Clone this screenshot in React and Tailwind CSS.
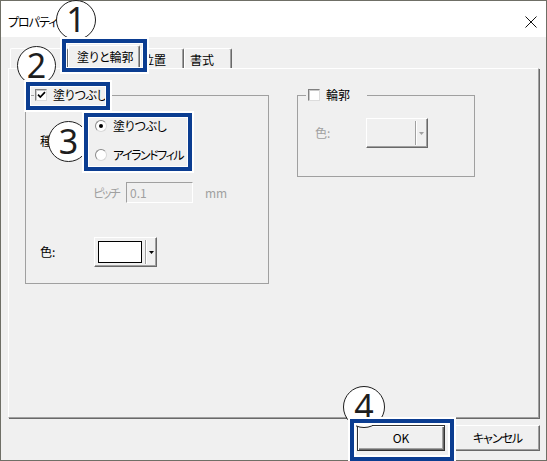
import React from "react";

function Checkbox({ checked }) {
  return (
    <span className="w-[12px] h-[12px] bg-white border border-t-[#808080] border-l-[#808080] border-r-[#dcdcdc] border-b-[#dcdcdc] shadow-[inset_1px_1px_0_#c8c8c8] flex items-center justify-center shrink-0">
      {checked && (
        <svg width="9" height="8" viewBox="0 0 9 8">
          <path d="M1 3.6 L3.3 6 L8 1.2" stroke="black" strokeWidth="1.7" fill="none" />
        </svg>
      )}
    </span>
  );
}

function Radio({ checked }) {
  return (
    <span className="w-[12px] h-[12px] rounded-full bg-white border border-t-[#8a8a8a] border-l-[#8a8a8a] border-r-[#d8d8d8] border-b-[#d8d8d8] flex items-center justify-center shrink-0">
      {checked && <span className="w-[4px] h-[4px] rounded-full bg-black" />}
    </span>
  );
}

function Arrow({ color }) {
  return (
    <svg width="5" height="3" viewBox="0 0 5 3">
      <path d="M0 0 H5 L2.5 3 Z" fill={color} />
    </svg>
  );
}

function Circle({ n, className }) {
  return (
    <div
      className={
        "absolute z-20 rounded-full bg-white border-[1.5px] border-[#1e1e1e] flex items-center justify-center text-[34px] leading-none text-[#1e1e1e] font-['Noto_Sans','Liberation_Sans',sans-serif] " +
        className
      }
    >
      <span className="-mt-[2px]">{n}</span>
    </div>
  );
}

export default function App() {
  return (
    <div className="relative w-[547px] h-[461px] font-['Noto_Sans_CJK_JP','Noto_Sans',sans-serif] [font-feature-settings:'palt'] text-[12px] text-black leading-[16px]">
      <div className="w-full h-full border border-[#6f6f66] bg-[#f0f0f0] flex flex-col overflow-hidden">
        {/* Title bar */}
        <div className="h-[36px] bg-white flex items-center justify-between pl-[7px] pr-[9px] pt-[6px] shrink-0">
          <span className="tracking-[-1px]">プロパティ</span>
          <svg width="12" height="12" viewBox="0 0 12 12">
            <path d="M0.5 0.5 L11.5 11.5 M11.5 0.5 L0.5 11.5" stroke="#111" strokeWidth="1" fill="none" />
          </svg>
        </div>

        {/* Body */}
        <div className="flex-1 flex flex-col px-[7px] pt-[8px]">
          {/* Tabs */}
          <div className="flex items-end h-[23px] pl-[2px] relative z-10">
            <div className="w-[58px] h-[20px] border-t border-l border-r border-t-white border-l-white border-r-[#696969] shadow-[inset_-1px_0_0_#a0a0a0] rounded-t-[2px] pt-[3px] text-center">
              図形
            </div>
            <div className="w-[72px] h-[24px] -mb-px bg-[#f0f0f0] border-t border-l border-r border-t-white border-l-white border-r-[#696969] shadow-[inset_-1px_0_0_#a0a0a0] rounded-t-[2px] pt-[3px] pl-[8px]">
              塗りと輪郭
            </div>
            <div className="w-[44px] h-[20px] border-t border-l border-r border-t-white border-l-white border-r-[#696969] shadow-[inset_-1px_0_0_#a0a0a0] rounded-t-[2px] pt-[3px] pl-[1px]">
              位置
            </div>
            <div className="w-[48px] h-[20px] border-t border-l border-r border-t-white border-l-white border-r-[#696969] shadow-[inset_-1px_0_0_#a0a0a0] rounded-t-[2px] pt-[3px] pl-[5px]">
              書式
            </div>
          </div>

          {/* Panel */}
          <div className="h-[350px] border border-t-white border-l-white border-r-[#a0a0a0] border-b-[#a0a0a0] shadow-[1px_1px_0_#696969] flex items-start gap-[28px] pl-[16px] pt-[19px]">
            {/* Fill group */}
            <fieldset className="w-[244px] border border-[#a0a0a0] pl-[14px] pb-[16px]">
              <legend className="-ml-[6px] pl-[1px] pr-[3px] h-[14px] flex items-center gap-[6px]">
                <Checkbox checked />
                <span className="tracking-[-0.3px]">塗りつぶし</span>
              </legend>
              <div className="flex items-center mt-[16px]">
                <span className="w-[55px]">種類:</span>
                <div className="flex flex-col gap-[13px]">
                  <div className="flex items-center gap-[6px] h-[16px]">
                    <Radio checked />
                    <span className="tracking-[-0.3px]">塗りつぶし</span>
                  </div>
                  <div className="flex items-center gap-[6px] h-[16px]">
                    <Radio />
                    <span className="tracking-[-1.5px]">アイランドフィル</span>
                  </div>
                </div>
              </div>
              <div className="flex items-center mt-[19px] pl-[53px] text-[#a0a0a0]">
                <span className="w-[33px] tracking-[-2px]">ピッチ</span>
                <div className="w-[67px] h-[21px] border border-t-[#a0a0a0] border-l-[#a0a0a0] border-r-white border-b-white pl-[3px] flex items-center">
                  0.1
                </div>
                <span className="ml-[12px]">mm</span>
              </div>
              <div className="flex items-center mt-[34px]">
                <span className="w-[54px]">色:</span>
                <div className="w-[63px] h-[30px] border border-t-white border-l-white border-r-[#696969] border-b-[#696969] shadow-[inset_-1px_-1px_0_#a0a0a0] flex items-center pl-[3px]">
                  <div className="w-[44px] h-[22px] border border-black bg-white" />
                  <div className="ml-[3px] w-[2px] h-[24px] border-l border-l-[#a0a0a0] border-r border-r-white" />
                  <div className="ml-[2px] flex items-center">
                    <Arrow color="#000" />
                  </div>
                </div>
              </div>
            </fieldset>

            {/* Outline group */}
            <fieldset className="w-[178px] border border-[#a0a0a0] pl-[17px] pb-[28px]">
              <legend className="-ml-[9px] pl-[2px] pr-[17px] h-[14px] flex items-center gap-[6px]">
                <Checkbox />
                <span>輪郭</span>
              </legend>
              <div className="flex items-center mt-[16px]">
                <span className="w-[51px] text-[#a0a0a0]">色:</span>
                <div className="w-[62px] h-[30px] border border-t-white border-l-white border-r-[#696969] border-b-[#696969] shadow-[inset_-1px_-1px_0_#a0a0a0] flex items-center justify-end pr-[3px]">
                  <div className="w-[2px] h-[24px] border-l border-l-[#a0a0a0] border-r border-r-white" />
                  <div className="ml-[2px] flex items-center">
                    <Arrow color="#a0a0a0" />
                  </div>
                </div>
              </div>
            </fieldset>
          </div>

          {/* Buttons */}
          <div className="flex justify-end gap-[10px] mt-[7px] -mr-px">
            <div className="w-[88px] h-[26px] border border-[#333] shadow-[inset_1px_1px_0_white,inset_-1px_-1px_0_#696969,inset_-2px_-2px_0_#a0a0a0] flex items-center justify-center">
              OK
            </div>
            <div className="w-[85px] h-[26px] border border-t-white border-l-white border-r-[#696969] border-b-[#696969] shadow-[inset_-1px_-1px_0_#a0a0a0] flex items-center justify-center">
              <span className="tracking-[-1px]">キャンセル</span>
            </div>
          </div>
        </div>
      </div>

      {/* Annotation circles */}
      <Circle n="1" className="left-[56px] top-[0px] w-[40px] h-[40px]" />
      <Circle n="2" className="left-[17px] top-[46px] w-[39px] h-[39px]" />
      <Circle n="3" className="left-[48px] top-[121px] w-[41px] h-[41px]" />
      <Circle n="4" className="left-[343px] top-[386px] w-[42px] h-[42px]" />

      {/* Annotation boxes */}
      <div className="absolute z-30 left-[62px] top-[39px] w-[85px] h-[33px] border-[4px] border-[#0b3d91] shadow-[0_0_0_2px_white,inset_0_0_0_1px_white]" />
      <div className="absolute z-30 left-[26px] top-[82px] w-[84px] h-[28px] border-[4px] border-[#0b3d91] shadow-[0_0_0_2px_white,inset_0_0_0_1px_white]" />
      <div className="absolute z-30 left-[84px] top-[113px] w-[108px] h-[58px] border-[4px] border-[#0b3d91] shadow-[0_0_0_2px_white,inset_0_0_0_1px_white]" />
      <div className="absolute z-30 left-[350px] top-[419px] w-[104px] h-[42px] border-[4px] border-[#0b3d91] shadow-[0_0_0_2px_white,inset_0_0_0_2px_white]" />
    </div>
  );
}
